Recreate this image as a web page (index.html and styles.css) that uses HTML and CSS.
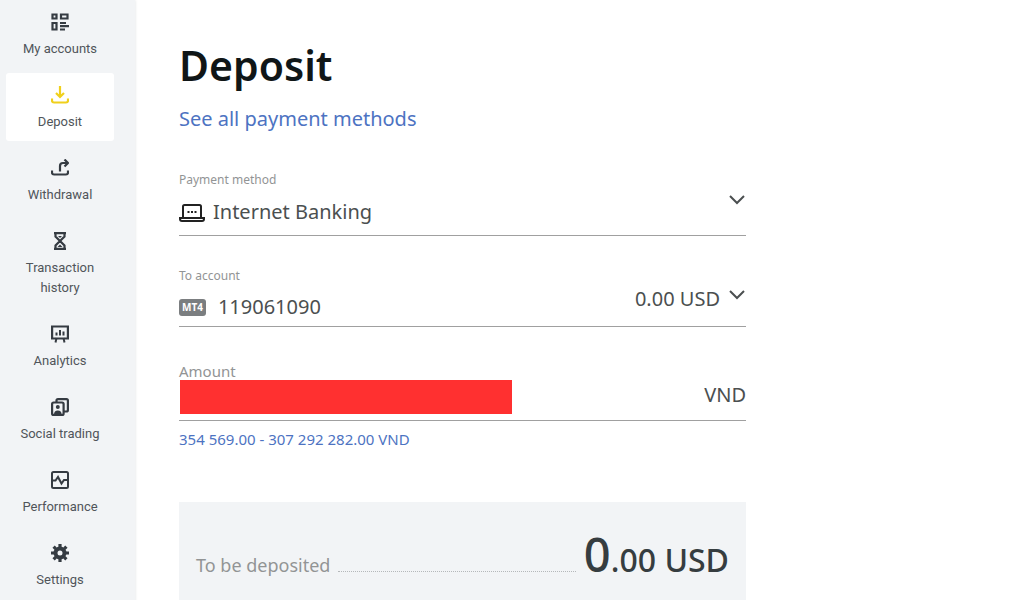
FILE: index.html
```html
<!DOCTYPE html>
<html lang="en">
<head>
<meta charset="utf-8">
<meta name="viewport" content="width=device-width, initial-scale=1">
<title>Deposit</title>
<link rel="stylesheet" href="styles.css">
</head>
<body>
<div class="app">
  <nav class="sidebar" aria-label="Main">
    <a class="nav-item" href="#accounts">
      <svg class="nav-icon" viewBox="0 0 18 18" fill="none" stroke="currentColor" stroke-width="2.200"><path d="M1.500 1.500h4v4h-4zM10 1.500h6.500v4H10zM1.500 10h4v6.500h-4zM9 10h6M9 13.200h9M9 16.500h5"/></svg>
      <span>My accounts</span>
    </a>
    <a class="nav-item active" href="#deposit" aria-current="page">
      <svg class="nav-icon" viewBox="0 0 18 18" fill="none" stroke="currentColor" stroke-width="2.200"><path d="M9 0v11M5 7l4 4 4-4M1 12.500v2q0 2 2 2h12q2 0 2-2v-2"/></svg>
      <span>Deposit</span>
    </a>
    <a class="nav-item" href="#withdrawal">
      <svg class="nav-icon" viewBox="0 0 18 18" fill="none" stroke="currentColor" stroke-width="2.200"><path d="M9 12.500V7q0-3 3-3h5M13.500 .500L17 4l-3.500 3.500M1 11.500v2q0 2 2 2h12q2 0 2-2v-2"/></svg>
      <span>Withdrawal</span>
    </a>
    <a class="nav-item" href="#history">
      <svg class="nav-icon" viewBox="0 0 18 18" fill="none" stroke="currentColor" stroke-width="2.200"><path d="M3 1.200h12M3 16.800h12M4.500 1v3.500L9 9l4.500-4.500V1M4.500 17v-3.500L9 9l4.500 4.500V17"/><path d="M6.500 15L9 12.500l2.500 2.500zM7 4h4L9 6z" fill="currentColor" stroke="none"/></svg>
      <span>Transaction history</span>
    </a>
    <a class="nav-item" href="#analytics">
      <svg class="nav-icon" viewBox="0 0 18 18" fill="none" stroke="currentColor" stroke-width="2.200"><path d="M1.100 1.500h15.800v12H1.100z"/><path d="M5.500 7.500v3M9 5v5.500M12.500 6.500v4M5.500 13l-1 4.500M12.500 13l1 4.500" stroke-width="2"/></svg>
      <span>Analytics</span>
    </a>
    <a class="nav-item" href="#social">
      <svg class="nav-icon" viewBox="0 0 18 18" fill="none" stroke="currentColor" stroke-width="2.200"><rect x="1.100" y="4.500" width="11.500" height="12.400" rx="1.500"/><path d="M5.500 4.500V2.500Q5.500 1.100 7 1.100h8.500Q16.900 1.100 16.900 2.500V12q0 1.500-1.500 1.500h-3"/><circle cx="6.800" cy="9" r="2" fill="currentColor" stroke="none"/><path d="M3 16.500q0-4 3.800-4t3.800 4z" fill="currentColor" stroke="none"/></svg>
      <span>Social trading</span>
    </a>
    <a class="nav-item" href="#performance">
      <svg class="nav-icon" viewBox="0 0 18 18" fill="none" stroke="currentColor" stroke-width="2"><rect x="1" y="1" width="16" height="16" rx="1.500"/><path d="M1 9.500h3.500L7 6l3.500 6.500L13 9h4"/></svg>
      <span>Performance</span>
    </a>
    <a class="nav-item" href="#settings">
      <svg class="nav-icon" viewBox="0 0 18 18" fill="none" stroke="currentColor"><circle cx="9" cy="9" r="4.500" stroke-width="4"/><path d="M9 0v3M9 15v3M0 9h3M15 9h3M2.600 2.600l2.200 2.200M13.200 13.200l2.200 2.200M2.600 15.400l2.200-2.200M13.200 4.800l2.200-2.200" stroke-width="3.200"/></svg>
      <span>Settings</span>
    </a>
  </nav>
  <main class="content">
    <h1 class="title">Deposit</h1>
    <a class="methods-link" href="#methods">See all payment methods</a>
    <form class="form">
      <div class="field method">
        <label class="label" for="method">Payment method</label>
        <div class="control">
          <svg class="laptop" viewBox="0 0 26 20" fill="none" stroke="#222" stroke-width="2"><path d="M4 14V3.500Q4 2 5.500 2h15Q22 2 22 3.500V14M1 15h24v1q0 2-2 2H3q-2 0-2-2z"/><path d="M8.500 9h2M12 9h2M15.500 9h2"/></svg>
          <select class="select" id="method"><option>Internet Banking</option></select>
          <svg class="chevron" viewBox="0 0 16 10"><path d="M1 1l7 7 7-7"/></svg>
        </div>
      </div>
      <div class="field account">
        <label class="label" for="account">To account</label>
        <div class="control">
          <span class="badge">MT4</span>
          <select class="select number" id="account"><option>119061090</option></select>
          <span class="balance">0.00 USD</span>
          <svg class="chevron" viewBox="0 0 16 10"><path d="M1 1l7 7 7-7"/></svg>
        </div>
      </div>
      <div class="field amount">
        <label class="label large" for="amount">Amount</label>
        <div class="control">
          <input class="amount-input" id="amount" type="text" inputmode="decimal">
          <span class="currency">VND</span>
        </div>
      </div>
      <button class="limits" type="button">354 569.00 - 307 292 282.00 VND</button>
      <section class="summary">
        <span class="summary-label">To be deposited</span>
        <span class="leader"></span>
        <strong class="total"><span class="whole">0</span>.00 USD</strong>
      </section>
    </form>
  </main>
</div>
</body>
</html>
```
FILE: styles.css
```css
* { box-sizing: border-box; }

body {
  margin: 0;
  color: #4b4f50;
  background: #fff;
  font-family: "Noto Sans", "Open Sans", sans-serif;
}

.app {
  display: flex;
  min-height: 100vh;
}

.sidebar {
  display: flex;
  flex: 0 0 135px;
  flex-direction: column;
  gap: 5px;
  padding: 0 21px 0 6px;
  background: #f2f4f6;
  box-shadow: 0 0 3px #dcdfe1;
}

.nav-item {
  display: flex;
  flex-direction: column;
  align-items: center;
  gap: 8px;
  padding: 13px 12px 9px;
  border-radius: 3px;
  color: #50555a;
  font: 13px/20px Roboto, sans-serif;
  text-align: center;
  text-decoration: none;
}

.nav-item.active { background: #fff; }

.nav-icon {
  width: 18px;
  height: 18px;
  color: #353b42;
}

.active .nav-icon { color: #f0d01c; }

.content {
  flex: 1;
  min-width: 0;
  padding: 35px 44px 0;
}

.title {
  margin: 0;
  color: #101617;
  font-size: 41px;
  font-weight: 600;
  line-height: 60px;
}

.methods-link {
  display: block;
  margin-top: 10px;
  color: #4d73c2;
  font-size: 20px;
  line-height: 28px;
  text-decoration: none;
}

.form {
  max-width: 567px;
  margin-top: 39px;
}

.field {
  border-bottom: 1px solid #a0a0a0;
}

.label {
  display: block;
  color: #929495;
  font-size: 12px;
  line-height: 16px;
}

.control {
  display: flex;
  align-items: center;
}

.method .control { height: 47px; }

.account { margin-top: 32px; }
.account .control { height: 42px; padding-top: 4px; }

.amount { margin-top: 36px; }
.amount .control { height: 40px; justify-content: space-between; }

.label.large {
  font-size: 15px;
  line-height: 17px;
}

.laptop {
  flex: none;
  width: 26px;
  height: 20px;
  margin-top: 2px;
}

.select {
  flex: 1;
  min-width: 0;
  margin: 0 0 0 8px;
  padding: 0;
  border: 0;
  color: inherit;
  background: transparent;
  font: 20px/28px "Noto Sans", "Open Sans", sans-serif;
  appearance: none;
}

.select.number { margin-left: 12px; }

.chevron {
  flex: none;
  width: 16px;
  height: 10px;
  margin: 0 1px 24px 9px;
  fill: none;
  stroke: #4b4f50;
  stroke-width: 2;
}

.badge {
  padding: 0 3px;
  border-radius: 3px;
  color: #fff;
  background: #7b7e80;
  font-size: 10px;
  font-weight: 700;
  line-height: 17px;
}

.balance {
  margin-bottom: 16px;
  font-size: 20px;
  line-height: 28px;
}

.amount-input {
  flex: 0 1 332px;
  min-width: 0;
  height: 34px;
  margin: 0 0 6px 1px;
  padding: 0 8px;
  border: 0;
  background: #ff3030;
  font-size: 20px;
}

.currency {
  margin-bottom: 10px;
  font-size: 20px;
  line-height: 28px;
}

.limits {
  display: block;
  margin: 7px 0 0;
  padding: 0;
  border: 0;
  color: #4d73c2;
  background: none;
  font: 15px/22px "Noto Sans", "Open Sans", sans-serif;
}

.summary {
  display: flex;
  align-items: baseline;
  gap: 8px;
  margin-top: 52px;
  padding: 22px 17px 16px;
  background: #f2f4f6;
}

.summary-label {
  color: #929495;
  font-size: 18px;
}

.leader {
  flex: 1;
  height: 6px;
  border-bottom: 1px dotted #b5b8ba;
}

.total {
  color: #363d40;
  font-size: 32px;
  font-weight: 500;
  line-height: 60px;
}

.whole { font-size: 47px; }
```
